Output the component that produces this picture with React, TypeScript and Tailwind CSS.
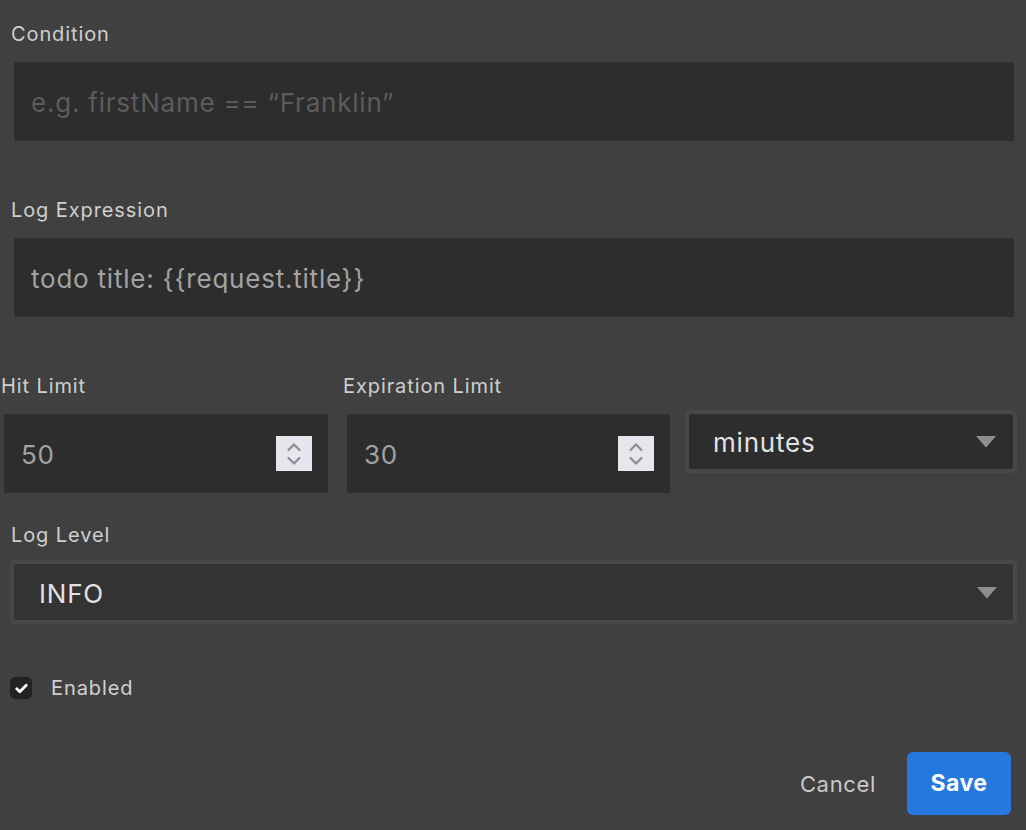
import React from "react";

const font = { fontFamily: "Inter, 'Noto Sans', sans-serif" };

function Triangle() {
  return (
    <svg width="20" height="11" viewBox="0 0 20 11" className="shrink-0">
      <path d="M0 0 L20 0 L11 10.5 Q10 11.5 9 10.5 Z" fill="#8e8e8e" />
    </svg>
  );
}

function Spinner() {
  return (
    <div className="w-[36px] h-[35px] bg-[#e8e6ed] flex items-center justify-center shrink-0">
      <svg width="16" height="26" viewBox="0 0 16 26" fill="none" stroke="#8c8a97" strokeWidth="2.2" strokeLinecap="round" strokeLinejoin="round">
        <path d="M2.5 9 L8 3.5 L13.5 9" />
        <path d="M2.5 17 L8 22.5 L13.5 17" />
      </svg>
    </div>
  );
}

export default function App() {
  return (
    <div className="w-[1026px] h-[830px] bg-[#404040] relative overflow-hidden" style={font}>
      <div className="flex flex-col">
        <div className="mt-[22px] ml-[11px] text-[20px] leading-[24px] tracking-[0.045em] text-[#cfcfcf]">Condition</div>
        <div className="mt-[16px] ml-[14px] w-[1000px] h-[79px] bg-[#2d2d2d] rounded-[2px] flex items-center pl-[17px] pt-[1px] text-[26px] tracking-[0.03em] text-[#5c5c5c]">
          e.g. firstName == “Franklin”
        </div>

        <div className="mt-[57px] ml-[11px] text-[20px] leading-[24px] tracking-[0.045em] text-[#cfcfcf]">Log Expression</div>
        <div className="mt-[16px] ml-[14px] w-[1000px] h-[79px] bg-[#2d2d2d] rounded-[2px] flex items-center pl-[17px] pt-[1px] text-[26px] tracking-[0.03em] text-[#a3a3a3]">
          todo title: {"{{request.title}}"}
        </div>

        <div className="mt-[57px] flex">
          <div className="w-[343px] flex flex-col">
            <div className="ml-[1px] text-[20px] leading-[24px] tracking-[0.045em] text-[#cfcfcf]">Hit Limit</div>
            <div className="mt-[16px] ml-[4px] w-[324px] h-[79px] bg-[#2d2d2d] rounded-[2px] flex items-center pl-[17px] pr-[16px] text-[26px] tracking-[0.03em] text-[#a3a3a3]">
              <span className="flex-1 pt-[1px]">50</span>
              <Spinner />
            </div>
          </div>
          <div className="w-[338px] flex flex-col">
            <div className="text-[20px] leading-[24px] tracking-[0.045em] text-[#cfcfcf]">Expiration Limit</div>
            <div className="mt-[16px] ml-[4px] w-[323px] h-[79px] bg-[#2d2d2d] rounded-[2px] flex items-center pl-[17px] pr-[16px] text-[26px] tracking-[0.03em] text-[#a3a3a3]">
              <span className="flex-1 pt-[1px]">30</span>
              <Spinner />
            </div>
          </div>
          <div className="ml-[4px] mt-[36px] w-[332px] h-[63px] bg-[#484848] rounded-[5px] p-[4px]">
            <div className="w-full h-full bg-[#2d2d2d] rounded-[2px] flex items-center pl-[24px] pr-[17px] text-[26px] tracking-[0.03em] text-[#e2e2e2]">
              <span className="flex-1 pt-[2px]">minutes</span>
              <Triangle />
            </div>
          </div>
        </div>

        <div className="mt-[30px] ml-[11px] text-[20px] leading-[24px] tracking-[0.045em] text-[#cfcfcf]">Log Level</div>
        <div className="mt-[13px] ml-[10px] w-[1007px] h-[64px] bg-[#484848] rounded-[5px] p-[4px]">
          <div className="w-full h-full bg-[#333333] rounded-[2px] flex items-center pl-[25px] pr-[16px] text-[26px] tracking-[0.03em] text-[#e2e2e2]">
            <span className="flex-1 pt-[2px]">INFO</span>
            <Triangle />
          </div>
        </div>

        <div className="mt-[52px] ml-[10px] flex items-center">
          <div className="w-[22px] h-[22px] rounded-[5px] bg-[#232323] flex items-center justify-center">
            <svg width="13" height="11" viewBox="0 0 13 11" fill="none" stroke="#ffffff" strokeWidth="2.8" strokeLinecap="round" strokeLinejoin="round">
              <path d="M1.8 5.8 L4.8 8.8 L11.2 2.2" />
            </svg>
          </div>
          <span className="ml-[19px] text-[20px] leading-[24px] tracking-[0.045em] text-[#d0d0d0]">Enabled</span>
        </div>

        <div className="mt-[52px] mr-[15px] flex justify-end items-center">
          <span className="text-[22px] tracking-[0.03em] text-[#c9c9c9] mr-[31px] pt-[1px]">Cancel</span>
          <div className="w-[104px] h-[63px] rounded-[6px] bg-[#2578dd] flex items-center justify-center text-[23px] tracking-[0.02em] font-bold text-white">
            Save
          </div>
        </div>
      </div>
    </div>
  );
}
